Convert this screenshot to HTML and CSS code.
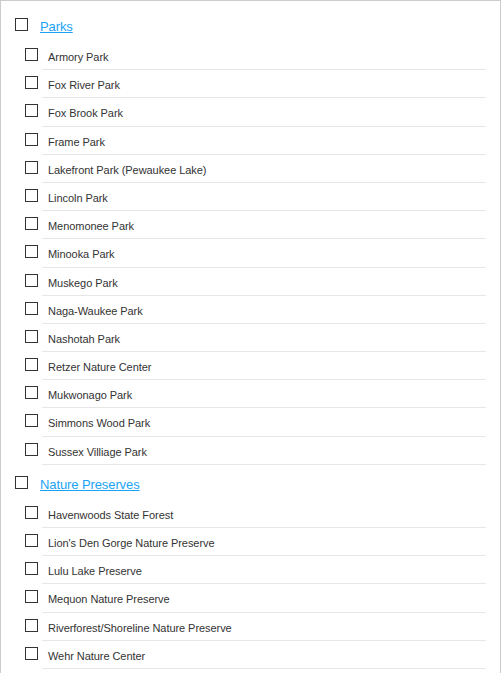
FILE: index.html
```html
<!DOCTYPE html>
<html>
<head>
<meta charset="utf-8">
<link rel="stylesheet" href="styles.css">
</head>
<body>
<div class="tree">
  <div class="group">
    <div class="parent"><span class="box"></span><a class="plink" href="#">Parks</a></div>
    <ul class="items">
      <li class="item"><span class="box"></span><span class="label">Armory Park</span></li>
      <li class="item"><span class="box"></span><span class="label">Fox River Park</span></li>
      <li class="item"><span class="box"></span><span class="label">Fox Brook Park</span></li>
      <li class="item"><span class="box"></span><span class="label">Frame Park</span></li>
      <li class="item"><span class="box"></span><span class="label">Lakefront Park (Pewaukee Lake)</span></li>
      <li class="item"><span class="box"></span><span class="label">Lincoln Park</span></li>
      <li class="item"><span class="box"></span><span class="label">Menomonee Park</span></li>
      <li class="item"><span class="box"></span><span class="label">Minooka Park</span></li>
      <li class="item"><span class="box"></span><span class="label">Muskego Park</span></li>
      <li class="item"><span class="box"></span><span class="label">Naga-Waukee Park</span></li>
      <li class="item"><span class="box"></span><span class="label">Nashotah Park</span></li>
      <li class="item"><span class="box"></span><span class="label">Retzer Nature Center</span></li>
      <li class="item"><span class="box"></span><span class="label">Mukwonago Park</span></li>
      <li class="item"><span class="box"></span><span class="label">Simmons Wood Park</span></li>
      <li class="item"><span class="box"></span><span class="label">Sussex Villiage Park</span></li>
    </ul>
  </div>
  <div class="group">
    <div class="parent"><span class="box"></span><a class="plink" href="#">Nature Preserves</a></div>
    <ul class="items">
      <li class="item"><span class="box"></span><span class="label">Havenwoods State Forest</span></li>
      <li class="item"><span class="box"></span><span class="label">Lion's Den Gorge Nature Preserve</span></li>
      <li class="item"><span class="box"></span><span class="label">Lulu Lake Preserve</span></li>
      <li class="item"><span class="box"></span><span class="label">Mequon Nature Preserve</span></li>
      <li class="item"><span class="box"></span><span class="label">Riverforest/Shoreline Nature Preserve</span></li>
      <li class="item"><span class="box"></span><span class="label">Wehr Nature Center</span></li>
    </ul>
  </div>
</div>
</body>
</html>
```
FILE: styles.css
```css
html, body {
  margin: 0;
  padding: 0;
  overflow: hidden;
  background: #fff;
}
body {
  font-family: "Liberation Sans", Arial, sans-serif;
}
.tree {
  box-sizing: border-box;
  width: 501px;
  min-height: 100vh;
  border: 1px solid #cccccc;
  border-bottom: none;
  padding-top: 6px;
}
.parent {
  display: flex;
  align-items: flex-start;
  height: 35px;
}
.box {
  display: block;
  box-sizing: border-box;
  width: 13px;
  height: 13px;
  border: 1px solid #333333;
  background: #fff;
  flex: none;
}
.parent .box {
  margin: 11px 0 0 14px;
}
.plink {
  margin: 12px 0 0 12px;
  font-size: 13px;
  line-height: 15px;
  letter-spacing: -0.1px;
  color: #1aa3f5;
  text-decoration: underline;
}
.items {
  list-style: none;
  margin: 0;
  padding: 0;
}
.item {
  display: flex;
  align-items: flex-start;
}
.item .box {
  margin: 6px 4px 0 24px;
}
.label {
  flex: 1;
  margin-right: 14px;
  box-sizing: border-box;
  height: 28.2px;
  padding: 9px 0 0 6px;
  border-bottom: 1px solid #e6e6e6;
  font-size: 11px;
  line-height: 13px;
  letter-spacing: -0.06px;
  color: #333333;
}
```
